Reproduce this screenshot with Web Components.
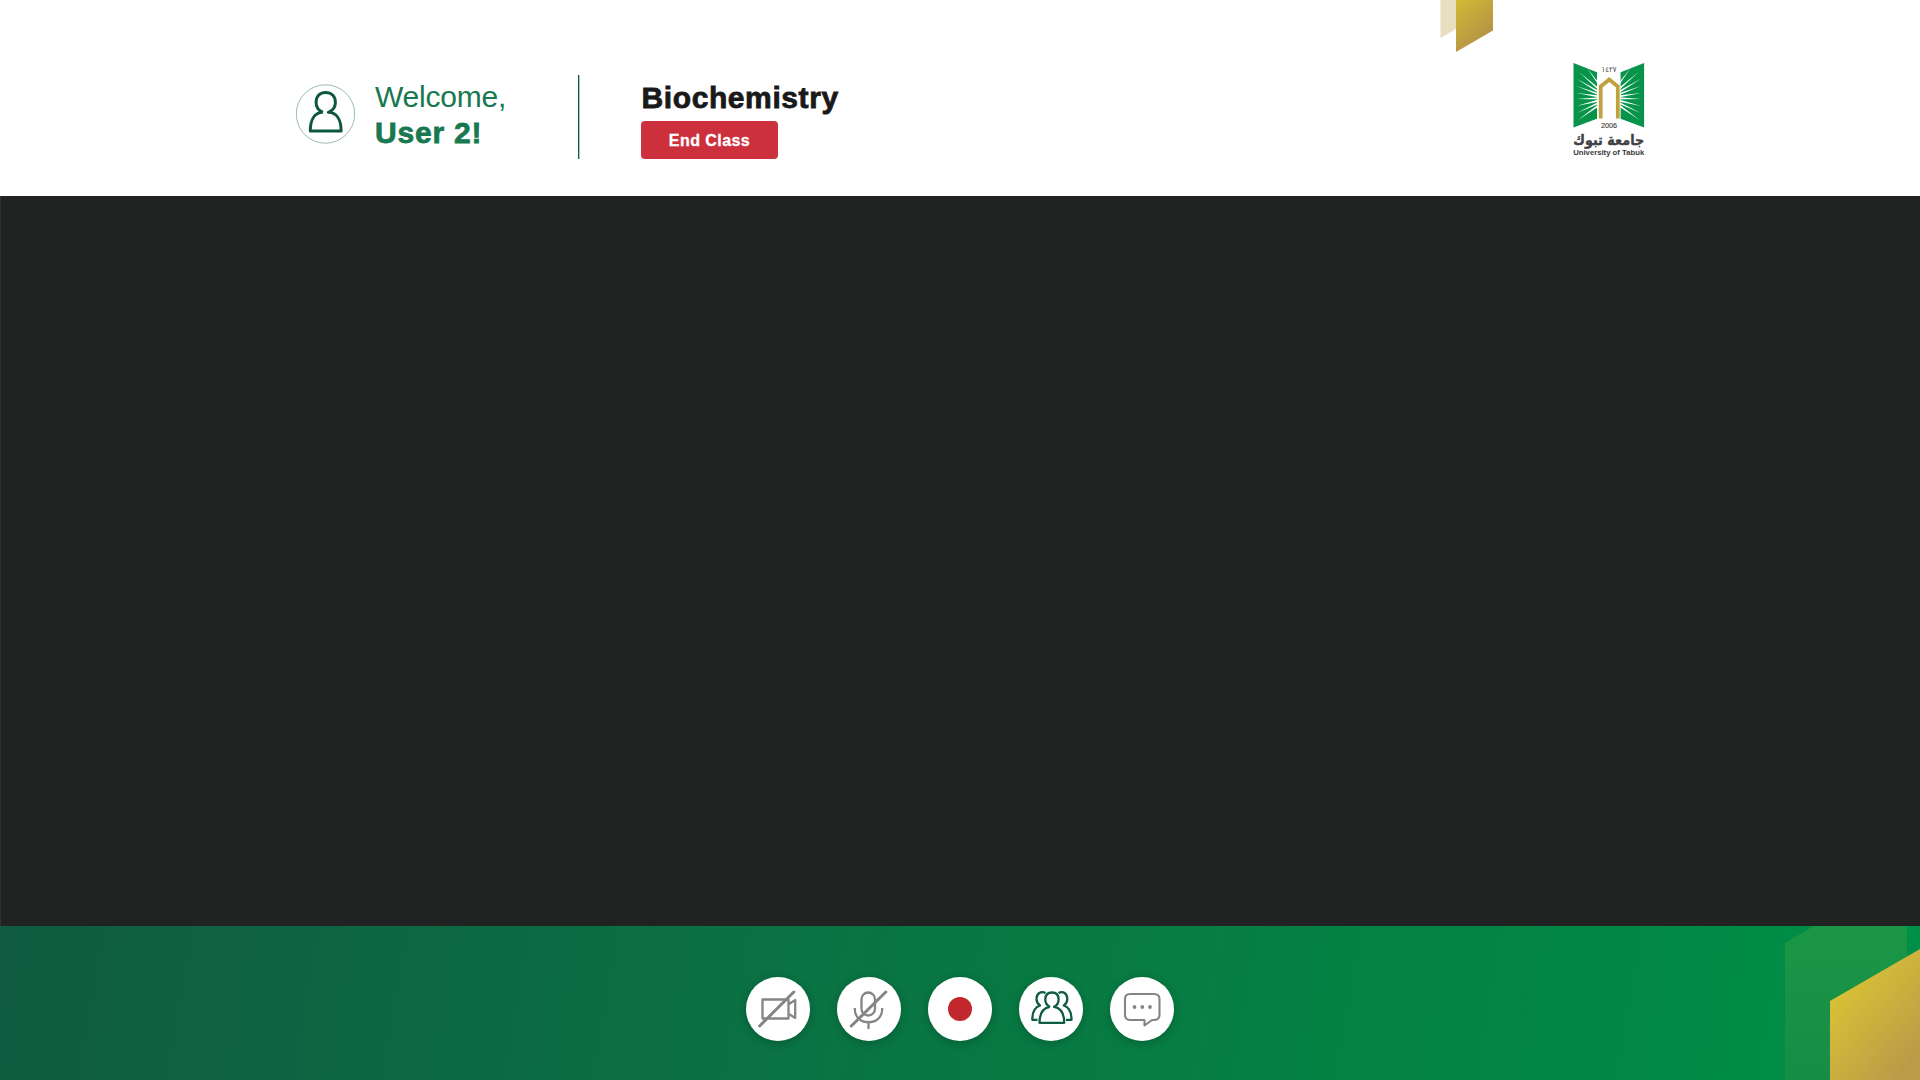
<!DOCTYPE html>
<html lang="en">
<head>
<meta charset="utf-8">
<title>Class</title>
<style>
html,body{margin:0;height:100%;overflow:hidden;background:#fff}
body{font-family:"Liberation Sans",Arial,sans-serif}
</style>
</head>
<body>
<class-room></class-room>
<script>
const define=(name,html)=>customElements.define(name,class extends HTMLElement{
  constructor(){super();this.attachShadow({mode:'open'}).innerHTML=html;}
});

define('user-greeting',`<style>
:host{display:flex;align-items:flex-start;width:282px;flex:none}
.avatar{display:block;width:60px;height:60px;margin:8.5px 19px 0 0}
.t{display:flex;flex-direction:column;color:#187850;white-space:nowrap;padding-top:4px}
.a{font-size:30px;line-height:36px;letter-spacing:-.2px}
.b{font-size:30px;line-height:36px;font-weight:700;letter-spacing:.8px;-webkit-text-stroke:.8px #187850}
</style>
<svg class="avatar" viewBox="0 0 60 60" fill="none"><circle cx="29.5" cy="30" r="29.2" stroke="#91b4a5" stroke-width=".9"/>
<path transform="translate(-.6 0)" d="M27.5 28.3C22.8 26.5 20.7 22.5 20.7 18.5C20.7 12 24.6 8.5 30.2 8.5S40 12 40 18.5C40 22.5 37.6 26.5 32.9 28.3C41 28.5 45.7 35.5 45.7 47H14.9C14.9 35.5 19.5 28.5 27.5 28.3" stroke="#0d5740" stroke-width="3" stroke-linejoin="round"/></svg>
<div class="t"><span class="a"><slot name="hello"></slot></span><span class="b"><slot name="name"></slot></span></div>`);

define('end-button',`<style>
:host{display:block}
button{display:block;width:137px;height:38px;padding:2px 0 0;border:0;border-radius:4px;background:#cd303d;color:#fff;font:700 16px/36px "Liberation Sans",Arial,sans-serif;letter-spacing:.45px;-webkit-text-stroke:.3px #fff}
</style><button><slot></slot></button>`);

define('class-info',`<style>
:host{display:flex;flex-direction:column;padding-left:62px;box-sizing:border-box}
.t{font-size:30px;line-height:36px;height:46px;padding:5px 0 0 .5px;box-sizing:border-box;font-weight:700;color:#19191a;white-space:nowrap;letter-spacing:.6px;-webkit-text-stroke:.8px #19191a}
</style><div class="t"><slot name="title"></slot></div><slot></slot>`);

let ray='';
[[15,5],[7,9],[5,16],[4.5,23],[4.5,30],[4.5,36],[4.5,43],[5,50],[6,57]].forEach(([x,y])=>{
  const dx=x-37,dy=y-35,l=Math.hypot(dx,dy),nx=-dy/l*1.45,ny=dx/l*1.45;
  ray+=`<path d="M${x} ${y}L${37+nx} ${35+ny}L${37-nx} ${35-ny}Z"/>`;
});
define('university-logo',`<style>
:host{display:block;width:76px;flex:none}svg{display:block;overflow:visible}
text{font-family:"Liberation Sans",Arial,sans-serif}
</style><svg width="76" height="98" viewBox="0 0 76 98">
<defs><g id="w"><path d="M1.5 0L25 9.3V55.7L1.5 64.5Z" fill="#07944a"/><g fill="#fff">${ray}</g></g></defs>
<use href="#w"/><use href="#w" transform="translate(73.6 0) scale(-1 1)"/>
<path d="M28.7 55.5V23.5L37.2 16.5L45.8 23.5V55.5" stroke="#bfa23e" stroke-width="3.8" fill="none"/>
<text x="37" y="9" font-size="8" fill="#444" text-anchor="middle" textLength="15" lengthAdjust="spacingAndGlyphs" style="font-family:'DejaVu Sans'">١٤٢٧</text>
<text x="37" y="65" font-size="7" fill="#444" text-anchor="middle" textLength="16" lengthAdjust="spacingAndGlyphs" stroke="#444" stroke-width=".15">2006</text>
<text x="36.7" y="82" font-size="14.5" fill="#414144" stroke="#414144" stroke-width=".4" font-weight="700" text-anchor="middle" direction="rtl" textLength="71" lengthAdjust="spacingAndGlyphs" style="font-family:'DejaVu Sans'">جامعة تبوك</text>
<text x="36.7" y="91.6" font-size="7.8" fill="#3a3a3d" font-weight="700" text-anchor="middle" textLength="71" lengthAdjust="spacingAndGlyphs">University of Tabuk</text>
</svg>`);

define('gold-ribbon',`<style>:host{display:block;position:absolute;left:1440px;top:0}svg{display:block}</style>
<svg width="54" height="53"><defs><linearGradient id="g" x1=".1" y1="0" x2=".6" y2=".8"><stop stop-color="#d0b934"/><stop offset="1" stop-color="#b69545"/></linearGradient></defs>
<path d="M.5 0H16V29L.5 38Z" fill="#e8dfc1"/><path d="M16 0H53V30.5L16 52Z" fill="url(#g)"/></svg>`);

define('class-header',`<style>
:host{display:flex;height:196px;box-sizing:border-box;padding:75px 272px 0 296px;background:#fff;align-items:flex-start;position:relative}
.line{flex:none;width:1px;height:84px;background:#0b5a3f;box-shadow:1px 0 rgba(11,90,63,.35)}
.info{flex:1}
university-logo{margin-top:-12px}
</style>
<user-greeting><span slot="hello">Welcome,</span><span slot="name">User 2!</span></user-greeting>
<div class="line"></div>
<class-info class="info"><span slot="title">Biochemistry</span><end-button>End Class</end-button></class-info>
<university-logo></university-logo><gold-ribbon></gold-ribbon>`);

customElements.define('round-control',class extends HTMLElement{
  constructor(){super();
    const icons={
camera:'<g stroke="#858585" stroke-width="2.3"><path d="M16.5 22.5H42.5V41.5H16.5Z" stroke-linejoin="round"/><path d="M43 27L49.2 23V41L43 37" stroke-linejoin="round"/><path d="M13.6 49L47.8 15" stroke-width="3" stroke-linecap="round"/></g>',
mic:'<g stroke="#858585" stroke-width="2.3"><rect x="24.5" y="15.5" width="13.5" height="23" rx="6.75"/><path d="M17.8 31V32C17.8 40 23.5 45.2 31.5 45.2S45.2 40 45.2 32V31M31.5 45.2V52"/><path d="M14.3 49L48.8 15" stroke-width="3" stroke-linecap="round"/></g>',
record:'<circle cx="32" cy="32" r="12" fill="#c1272d"/>',
people:'<g stroke="#0d5c43" stroke-width="2.3" stroke-linejoin="round"><path d="M31 29.8C28 28.5 26.3 25.5 26.3 22.5C26.3 18 29 15.5 33 15.5S39.6 18 39.6 22.5C39.6 25.5 38 28.5 35 29.8C41.5 30.8 45.2 36.5 45.2 45.8H20.5C20.5 36.5 24.5 30.8 31 29.8"/><path d="M26.5 16C22 13.5 17.5 16.5 17.5 22C17.5 25 18.8 27 21 28.5C16 30 13.3 35 13.3 42.8H18.5M39.5 16C44 13.5 48.3 16.5 48.3 22C48.3 25 47 27 44.8 28.5C49.8 30 52.5 35 52.5 42.8H47"/></g>',
chat:'<path d="M20 17H44Q49.5 17 49.5 22V37.5Q49.5 43 44 43H42L34.5 48.5V43H20Q15 43 15 37.5V22Q15 17 20 17Z" stroke="#858585" stroke-width="2.1" stroke-linejoin="round"/><g fill="#858585"><circle cx="24.5" cy="30" r="1.9"/><circle cx="32.3" cy="30" r="1.9"/><circle cx="40" cy="30" r="1.9"/></g>'};
    this.attachShadow({mode:'open'}).innerHTML=`<style>:host{display:block;width:64px;height:64px;border-radius:50%;background:#fff;box-shadow:0 2px 8px rgba(0,30,15,.28)}svg{display:block}</style><svg width="64" height="64" viewBox="0 0 64 64" fill="none">${icons[this.getAttribute('icon')]||''}</svg>`;
  }
});

define('control-bar',`<style>
:host{display:flex;justify-content:center;gap:27.2px;height:154px;box-sizing:border-box;padding-top:50.5px;position:relative;background:linear-gradient(100deg,#105b41 0%,#0b6f43 35%,#077c43 60%,#008b45 90%,#009047 100%)}
.deco{position:absolute;right:0;bottom:0;display:block}
</style>
<svg class="deco" width="140" height="154"><defs><linearGradient id="g" x1=".1" y1=".2" x2=".75" y2="1"><stop stop-color="#dcc434"/><stop offset="1" stop-color="#b99b48"/></linearGradient><linearGradient id="h" x1="0" y1="0" x2="0" y2="1"><stop stop-color="#1b9645"/><stop offset="1" stop-color="#168d46"/></linearGradient></defs>
<path d="M5 154V17L34 0H127V154Z" fill="url(#h)"/><path d="M50 154V75L140 23V154Z" fill="url(#g)"/></svg>
<round-control icon="camera"></round-control><round-control icon="mic"></round-control><round-control icon="record"></round-control><round-control icon="people"></round-control><round-control icon="chat"></round-control>`);

define('video-stage',`<style>:host{display:block;flex:1;background:#212322;box-shadow:inset 1px 0 #303231}</style>`);
define('class-room',`<style>:host{display:flex;flex-direction:column;width:1920px;height:1080px;overflow:hidden}</style><class-header></class-header><video-stage></video-stage><control-bar></control-bar>`);
</script>
</body>
</html>
